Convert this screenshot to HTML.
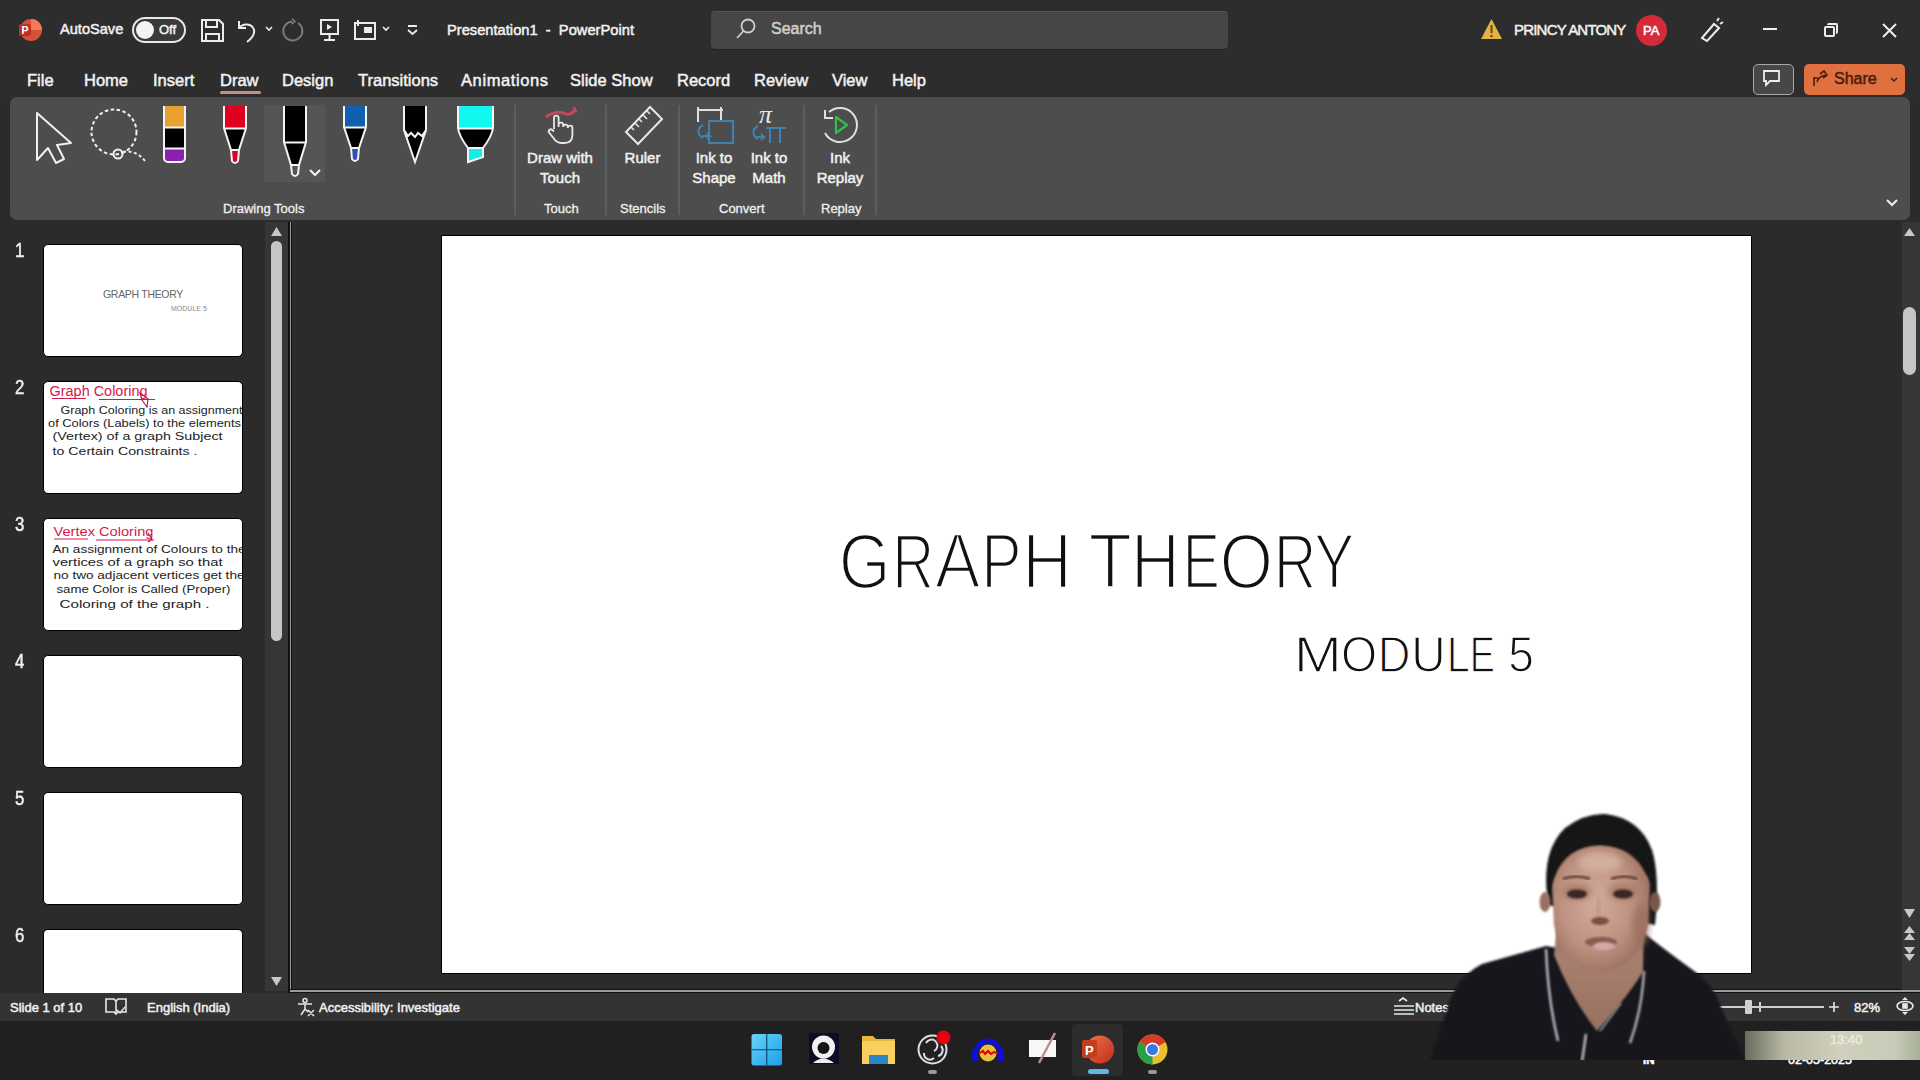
<!DOCTYPE html>
<html><head><meta charset="utf-8">
<style>
*{margin:0;padding:0;box-sizing:border-box}
html,body{width:1920px;height:1080px;overflow:hidden;background:#2b2b2b;font-family:"Liberation Sans",sans-serif;color:#fff}
.a{position:absolute}
.t{position:absolute;white-space:pre;line-height:1}
.tab,.lbl,.num,.t{-webkit-text-stroke:0.5px currentColor}
.glbl{-webkit-text-stroke:0.3px currentColor}
#title{left:0;top:0;width:1920px;height:97px;background:#2d2d2d}
#ribbon{left:10px;top:97px;width:1900px;height:123px;background:#4d4d4d;border-radius:7px}
.tab{position:absolute;top:72px;font-size:16.5px;color:#f2f2f2;white-space:pre;line-height:1}
.lbl{position:absolute;font-size:15px;color:#f0f0f0;white-space:pre;line-height:20px;text-align:center}
.glbl{position:absolute;top:202px;font-size:13px;color:#f0f0f0;white-space:pre;line-height:1}
.sep{position:absolute;top:105px;width:2px;height:110px;background:#5e5e5e}
#pane{left:0;top:220px;width:290px;height:773px;background:#2b2b2b}
.num{position:absolute;left:15px;font-size:20.5px;color:#f0f0f0;line-height:1;transform:scaleX(0.82);transform-origin:0 0;margin-top:-3px}
.thumb{position:absolute;left:43px;width:200px;height:113px;background:#fff;border:1.5px solid #000;border-radius:5px;overflow:hidden}
#status{left:0;top:993px;width:1920px;height:28px;background:#333}
#taskbar{left:0;top:1021px;width:1920px;height:59px;background:#202020}
</style></head>
<body>
<!-- Title bar + tabs -->
<div id="title" class="a"></div>

<!-- PowerPoint logo -->
<svg class="a" style="left:16px;top:17px" width="28" height="26" viewBox="0 0 28 26"><circle cx="15" cy="13" r="11" fill="#d8503a"/><path d="M15 2a11 11 0 0 1 11 11H15z" fill="#f07a5a"/><rect x="3" y="7" width="12" height="12" rx="2" fill="#b83420"/><text x="5.5" y="17" font-family="Liberation Sans" font-weight="bold" font-size="10.5" fill="#fff">P</text></svg>

<div class="t" style="left:60px;top:22px;font-size:14.6px;color:#f0f0f0">AutoSave</div>
<!-- toggle -->
<div class="a" style="left:132px;top:17px;width:54px;height:26px;border:2px solid #e8e8e8;border-radius:13px;background:#3a3a3a"></div>
<div class="a" style="left:136px;top:21px;width:18px;height:18px;border-radius:50%;background:#f4f4f4"></div>
<div class="t" style="left:159px;top:23px;font-size:13px;color:#f0f0f0">Off</div>

<!-- QAT icons -->
<svg class="a" style="left:195px;top:12px" width="230" height="36" viewBox="0 0 230 36">
 <g fill="none" stroke="#ececec" stroke-width="2">
  <!-- save -->
  <path d="M7 8h17l4 4v17H7z"/><path d="M11 8v7h11V8"/><path d="M11 29v-7h13v7"/>
  <!-- undo -->
  <path d="M44 9v7h7"/><path d="M44 16c4-5 13-5 15 2c1 5-3 9-7 12"/>
  <path d="M71 15l3 3l3-3" stroke-width="1.6"/>
  <!-- redo -->
  <path d="M103 11a9.5 9.5 0 1 1-6-1.5" stroke="#7a7a7a"/><path d="M97 6.5l3 3l-3.5 2.5" stroke="#7a7a7a" stroke-width="1.6"/>
  <!-- present -->
  <path d="M125 8h19M126 8v14h17V8M134.5 22v6M129 28h11"/>
  <path d="M132 12l5 3l-5 3z" fill="#ececec" stroke="none"/>
  <!-- another -->
  <path d="M160 11h20v16h-20z"/><path d="M163 8v6M160 11h6"/>
  <rect x="169" y="15" width="8" height="6" fill="#ececec" stroke="none"/>
  <path d="M188 15l3 3l3-3" stroke-width="1.6"/>
  <!-- customize -->
  <path d="M213 14h9M213 18l4.5 4l4.5-4" stroke-width="1.8"/>
 </g>
</svg>

<div class="t" style="left:447px;top:23px;font-size:14.7px;color:#f0f0f0">Presentation1  -  PowerPoint</div>

<!-- search -->
<div class="a" style="left:711px;top:11px;width:517px;height:38px;background:#464646;border-top:1.5px solid #555;border-radius:4px;box-shadow:0 1px 0 #222"></div>
<svg class="a" style="left:735px;top:16px" width="24" height="26" viewBox="0 0 24 26"><g fill="none" stroke="#cfcfcf" stroke-width="1.8"><circle cx="13" cy="10" r="6.5"/><path d="M8.5 15L2 22"/></g></svg>
<div class="t" style="left:771px;top:21px;font-size:16px;color:#cfcfcf">Search</div>

<!-- warning -->
<svg class="a" style="left:1480px;top:18px" width="23" height="23" viewBox="0 0 23 23"><path d="M11.5 1L22 21H1z" fill="#e3b04a"/><path d="M11.5 7v8" stroke="#6b4a10" stroke-width="2"/><circle cx="11.5" cy="18" r="1.2" fill="#6b4a10"/></svg>
<div class="t" style="left:1514px;top:22px;font-size:15px;color:#f0f0f0;letter-spacing:-0.8px">PRINCY ANTONY</div>
<div class="a" style="left:1636px;top:15px;width:31px;height:31px;border-radius:50%;background:#d42a3c"></div>
<div class="t" style="left:1643px;top:24px;font-size:13px;color:#fff">PA</div>
<!-- pen icon -->
<svg class="a" style="left:1698px;top:16px" width="28" height="28" viewBox="0 0 28 28"><g fill="none" stroke="#ececec" stroke-width="2"><path d="M4 22L16 8l5 4L9 25z"/><path d="M19 5l2-3M22 8l3-2"/></g></svg>
<!-- window controls -->
<div class="a" style="left:1763px;top:28px;width:14px;height:2px;background:#eee"></div>
<div class="a" style="left:1824px;top:26px;width:11px;height:11px;border:2px solid #eee;border-radius:2px"></div>
<div class="a" style="left:1827px;top:23px;width:11px;height:11px;border-top:2px solid #eee;border-right:2px solid #eee;border-radius:2px"></div>
<svg class="a" style="left:1881px;top:22px" width="17" height="17" viewBox="0 0 17 17"><path d="M2 2l13 13M15 2L2 15" stroke="#eee" stroke-width="2"/></svg>

<!-- tabs -->
<div class="tab" style="left:27px">File</div>
<div class="tab" style="left:84px">Home</div>
<div class="tab" style="left:153px">Insert</div>
<div class="tab" style="left:220px">Draw</div>
<div class="a" style="left:220px;top:91px;width:41px;height:3px;background:#c8907a;border-radius:2px"></div>
<div class="tab" style="left:282px">Design</div>
<div class="tab" style="left:358px">Transitions</div>
<div class="tab" style="left:461px;letter-spacing:0.6px">Animations</div>
<div class="tab" style="left:570px">Slide Show</div>
<div class="tab" style="left:677px">Record</div>
<div class="tab" style="left:754px">Review</div>
<div class="tab" style="left:832px">View</div>
<div class="tab" style="left:892px">Help</div>

<!-- comment & share -->
<div class="a" style="left:1753px;top:64px;width:41px;height:31px;border:1.5px solid #a8a8a8;border-radius:5px;background:#474747"></div>
<svg class="a" style="left:1762px;top:69px" width="20" height="18" viewBox="0 0 20 18"><path d="M2 2h15v10H8l-4 4v-4H2z" fill="none" stroke="#eee" stroke-width="1.8"/></svg>
<div class="a" style="left:1804px;top:64px;width:101px;height:31px;background:#e07040;border-radius:5px"></div>
<svg class="a" style="left:1812px;top:70px" width="18" height="18" viewBox="0 0 18 18"><g fill="none" stroke="#4a1e0c" stroke-width="1.6"><path d="M2 16V8h4M8 4l4-3l3 4l-4 3M5 12c1-4 4-6 8-7"/></g></svg>
<div class="t" style="left:1834px;top:71px;font-size:16px;color:#4a1e0c">Share</div>
<svg class="a" style="left:1889px;top:76px" width="10" height="7" viewBox="0 0 10 7"><path d="M2 2l3 3l3-3" fill="none" stroke="#4a1e0c" stroke-width="1.5"/></svg>

<!-- Ribbon -->
<div id="ribbon" class="a"></div>

<!-- Ribbon content -->
<svg class="a" style="left:10px;top:97px" width="880" height="123" viewBox="10 97 880 123">
 <g fill="none" stroke="#f0f0f0" stroke-width="2" stroke-linejoin="round">
  <!-- select arrow -->
  <path d="M37 113L37 160L48 148L56 163L64 159L57 145L71 143Z"/>
  <!-- lasso -->
  <circle cx="114" cy="132" r="22.5" stroke-dasharray="3.5 2.5"/>
  <circle cx="118" cy="154" r="4.5"/>
  <path d="M123 152c8-2 17 2 22 9" stroke-dasharray="3 2.5"/>
 </g>
 <!-- orange/black/purple marker -->
 <rect x="164" y="106" width="21" height="21" fill="#e8a030"/>
 <rect x="164" y="127" width="21" height="21" fill="#000"/>
 <rect x="165" y="149" width="19" height="13" rx="3" fill="#8a20b0"/>
 <path d="M164 106v52a4 4 0 0 0 4 4h13a4 4 0 0 0 4-4V106M164 127.5h21M164 148.5h21" fill="none" stroke="#f4f4f4" stroke-width="2"/>
 <!-- red pen -->
 <rect x="224" y="106" width="22" height="22" fill="#e00020"/>
 <path d="M224 128L231 150H239L246 128Z" fill="#000"/>
 <path d="M231 150L232 161Q235 165 238 161L239 150Z" fill="#e00020"/>
 <path d="M224 106v22l7 22l1 11q3 4 6 0l1-11l7-22V106M224 128.5h22M231 150h8" fill="none" stroke="#f4f4f4" stroke-width="2"/>
 <!-- selected black pen bg -->
 <rect x="264" y="105" width="61" height="77" fill="#555"/>
 <rect x="284" y="106" width="22" height="36" fill="#000"/>
 <path d="M284 142L291 165H299L306 142Z" fill="#000"/>
 <path d="M284 106v36l7 23l1 9q3 4 6 0l1-9l7-23V106M284 142.5h22M291 165h8" fill="none" stroke="#f4f4f4" stroke-width="2"/>
 <path d="M310 170l5 5l5-5" fill="none" stroke="#f4f4f4" stroke-width="2"/>
 <!-- blue pen -->
 <rect x="344" y="106" width="22" height="21" fill="#1060b0"/>
 <path d="M344 127L351 148H359L366 127Z" fill="#000"/>
 <path d="M351 148L352 159Q355 163 358 159L359 148Z" fill="#3050c0"/>
 <path d="M344 106v21l7 21l1 11q3 4 6 0l1-11l7-21V106M344 127.5h22M351 148h8" fill="none" stroke="#f4f4f4" stroke-width="2"/>
 <!-- pencil -->
 <path d="M404 106h22v24l-4 6l-4-3l-3 4l-4-4l-3 3l-4-6z" fill="#000"/>
 <path d="M404 130l4 6l3-3l4 4l3-4l4 3l4-6l-11 32z" fill="#000"/>
 <path d="M404 106v24l11 32l11-32V106M404 130l4 6l3-3l4 4l3-4l4 3l4-6" fill="none" stroke="#f4f4f4" stroke-width="2"/>
 <!-- highlighter -->
 <rect x="458" y="106" width="35" height="22" fill="#10f8f0"/>
 <path d="M458 128Q459 136 468 148H483Q492 136 493 128Z" fill="#000"/>
 <path d="M468 148v14l15-5v-9Z" fill="#10f0e8"/>
 <path d="M458 106v22q1 8 10 20v14l15-5v-9q9-12 10-20V106M458 128.5h35M468 148h15" fill="none" stroke="#f4f4f4" stroke-width="2"/>

 <!-- draw with touch hand -->
 <path d="M546 117c6-5 14-6 20-3c4 1 7-1 9-5" fill="none" stroke="#c84858" stroke-width="3"/>
 <path d="M574 107l2 4l-4 1" fill="none" stroke="#c84858" stroke-width="2"/>
 <path d="M554 129v-11a2.3 2.3 0 0 1 4.6 0v9v-2a2.3 2.3 0 0 1 4.6 0v2a2.3 2.3 0 0 1 4.6 0v1a2.3 2.3 0 0 1 4.6 0v7c0 5-3 8-8 8h-3c-4 0-6-2-8-5l-4-5a2 2 0 0 1 3-3l1.5 1.5" fill="none" stroke="#e8e8e8" stroke-width="1.8"/>
 <!-- ruler -->
 <path d="M626 132L650 107L662 119L638 144Z" fill="none" stroke="#e8e8e8" stroke-width="2"/>
 <path d="M631 127l3 3M635 123l4 4M639 119l3 3M643 115l4 4M647 111l3 3" stroke="#e8e8e8" stroke-width="1.5"/>
 <!-- ink to shape -->
 <path d="M697 110h26M698 107v15M721 107v15" stroke="#e0e0e0" stroke-width="2" fill="none"/>
 <path d="M709 121h24v22h-24z" fill="none" stroke="#3f82b0" stroke-width="2"/>
 <path d="M703 125c-6 3-6 10 0 13M702 136h8l-3-3M710 136l-3 3" fill="none" stroke="#3f82b0" stroke-width="2"/>
 <!-- ink to math -->
 <text x="759" y="123" font-family="Liberation Serif" font-style="italic" font-size="26" fill="#e8e8e8">π</text>
 <path d="M766 128h20M770 128v15M780 128v15" stroke="#3f82b0" stroke-width="2" fill="none"/>
 <path d="M758 126c-6 3-6 10 0 13M757 137h7l-3-3M764 137l-3 3" fill="none" stroke="#3f82b0" stroke-width="2"/>
 <!-- ink replay -->
 <path d="M829 112A17 17 0 1 1 825 133" fill="none" stroke="#e0e0e0" stroke-width="2"/>
 <path d="M825 110v8h8" fill="none" stroke="#e0e0e0" stroke-width="2"/>
 <path d="M836 117l11 8l-11 8z" fill="none" stroke="#30c050" stroke-width="2.2" stroke-linejoin="round"/>
</svg>
<div class="sep" style="left:514px"></div>
<div class="sep" style="left:605px"></div>
<div class="sep" style="left:678px"></div>
<div class="sep" style="left:803px"></div>
<div class="sep" style="left:875px"></div>

<div class="lbl" style="left:520px;top:148px;width:80px">Draw with<br>Touch</div>
<div class="lbl" style="left:610px;top:148px;width:65px">Ruler</div>
<div class="lbl" style="left:684px;top:148px;width:60px">Ink to<br>Shape</div>
<div class="lbl" style="left:740px;top:148px;width:58px">Ink to<br>Math</div>
<div class="lbl" style="left:808px;top:148px;width:64px">Ink<br>Replay</div>

<div class="glbl" style="left:223px">Drawing Tools</div>
<div class="glbl" style="left:544px">Touch</div>
<div class="glbl" style="left:620px">Stencils</div>
<div class="glbl" style="left:719px">Convert</div>
<div class="glbl" style="left:821px">Replay</div>
<svg class="a" style="left:1884px;top:197px" width="16" height="12" viewBox="0 0 16 12"><path d="M3 3l5 5l5-5" fill="none" stroke="#f0f0f0" stroke-width="2"/></svg>

<!-- Slide pane -->
<div class="num" style="top:243px">1</div>
<div class="num" style="top:380px">2</div>
<div class="num" style="top:517px">3</div>
<div class="num" style="top:654px">4</div>
<div class="num" style="top:791px">5</div>
<div class="num" style="top:928px">6</div>

<div class="thumb" style="top:244px">
  <div class="t" style="left:59px;top:44px;font-size:10.5px;color:#666;letter-spacing:-0.3px;-webkit-text-stroke:0">GRAPH THEORY</div>
  <div class="t" style="left:127px;top:60px;font-size:7px;color:#888;-webkit-text-stroke:0">MODULE 5</div>
</div>
<div class="thumb" style="top:381px">
  <svg width="198" height="110" viewBox="0 0 198 110" style="position:absolute;left:0;top:0">
   <text x="5.5" y="14" font-family="Liberation Sans" font-size="14" fill="#d81848" textLength="98" lengthAdjust="spacingAndGlyphs">Graph  Coloring</text>
   <path d="M8 16.5h34M55 17.5h56" fill="none" stroke="#d81848" stroke-width="1"/>
   <path d="M96 11l8 6l-1 8l-5-7z" fill="none" stroke="#c01040" stroke-width="1.1"/>
   <g font-family="Liberation Sans" font-size="10.5" fill="#222">
    <text x="16.5" y="32" textLength="182" lengthAdjust="spacingAndGlyphs">Graph  Coloring   is an assignment</text>
    <text x="4" y="45" textLength="193" lengthAdjust="spacingAndGlyphs">of Colors (Labels) to the elements</text>
    <text x="8.5" y="58" textLength="170" lengthAdjust="spacingAndGlyphs">(Vertex)  of  a  graph  Subject</text>
    <text x="8.5" y="72.5" textLength="145" lengthAdjust="spacingAndGlyphs">to  Certain   Constraints .</text>
   </g>
  </svg>
</div>
<div class="thumb" style="top:518px">
  <svg width="198" height="110" viewBox="0 0 198 110" style="position:absolute;left:0;top:0">
   <text x="9.5" y="17" font-family="Liberation Sans" font-size="13" fill="#d81848" textLength="100" lengthAdjust="spacingAndGlyphs">Vertex  Coloring</text>
   <path d="M10 20h34M52 21h58" fill="none" stroke="#d81848" stroke-width="1"/>
   <path d="M104 14l4 6l-4 3" fill="none" stroke="#c01040" stroke-width="1.2"/>
   <g font-family="Liberation Sans" font-size="10.5" fill="#222">
    <text x="8.5" y="33.5" textLength="193" lengthAdjust="spacingAndGlyphs">An  assignment  of  Colours  to  the</text>
    <text x="8.5" y="46.5" textLength="170" lengthAdjust="spacingAndGlyphs">vertices  of  a  graph  so  that</text>
    <text x="9.5" y="59.5" textLength="191" lengthAdjust="spacingAndGlyphs">no two  adjacent  vertices  get the</text>
    <text x="12.5" y="74" textLength="174" lengthAdjust="spacingAndGlyphs">same  Color  is  Called  (Proper)</text>
    <text x="15.5" y="89" textLength="150" lengthAdjust="spacingAndGlyphs">Coloring   of   the   graph .</text>
   </g>
  </svg>
</div>
<div class="thumb" style="top:655px"></div>
<div class="thumb" style="top:792px"></div>
<div class="thumb" style="top:929px;height:80px;border-bottom:none;border-radius:5px 5px 0 0"></div>

<!-- left scrollbar -->
<div class="a" style="left:265px;top:222px;width:23px;height:769px;background:#363636"></div>
<svg class="a" style="left:270px;top:226px" width="13" height="11" viewBox="0 0 13 11"><path d="M1 10L6.5 1L12 10Z" fill="#c8c8c8"/></svg>
<div class="a" style="left:271px;top:241px;width:11px;height:400px;background:#c5c5c5;border-radius:6px"></div>
<svg class="a" style="left:270px;top:976px" width="13" height="11" viewBox="0 0 13 11"><path d="M1 1L6.5 10L12 1Z" fill="#c8c8c8"/></svg>
<div class="a" style="left:288px;top:222px;width:4px;height:771px;background:#111"></div>
<div class="a" style="left:289.5px;top:222px;width:1.5px;height:770px;background:#9a9a9a"></div>

<!-- main area bottom border -->
<div class="a" style="left:290px;top:989px;width:1630px;height:4px;background:#111"></div>
<div class="a" style="left:290px;top:990px;width:1630px;height:1.5px;background:#9a9a9a"></div>

<!-- slide -->
<div class="a" style="left:441px;top:235px;width:1311px;height:739px;background:#fff;border:1.5px solid #000"></div>
<svg class="a" style="left:0;top:0;pointer-events:none" width="1920" height="1080" viewBox="0 0 1920 1080">
<g font-family="Liberation Sans" fill="#111" stroke="#fff" stroke-width="2.6">
<text transform="translate(838.77,587.80) scale(0.848,1)" font-size="78.51">G</text>
<text transform="translate(892.25,587.80) scale(0.740,1)" font-size="78.51">R</text>
<text transform="translate(934.90,587.80) scale(0.865,1)" font-size="78.51">A</text>
<text transform="translate(981.35,587.80) scale(0.771,1)" font-size="78.51">P</text>
<text transform="translate(1022.20,587.80) scale(0.876,1)" font-size="78.51">H</text>
<text transform="translate(1088.58,587.80) scale(0.907,1)" font-size="78.51">T</text>
<text transform="translate(1131.00,587.80) scale(0.860,1)" font-size="78.51">H</text>
<text transform="translate(1182.66,587.80) scale(0.708,1)" font-size="78.51">E</text>
<text transform="translate(1219.45,587.80) scale(0.878,1)" font-size="78.51">O</text>
<text transform="translate(1273.77,587.80) scale(0.753,1)" font-size="78.51">R</text>
<text transform="translate(1313.88,587.80) scale(0.775,1)" font-size="78.51">Y</text>
</g>
<g font-family="Liberation Sans" fill="#111" stroke="#fff" stroke-width="1.4">
<text transform="translate(1293.68,672.40) scale(1.153,1)" font-size="50.11">M</text>
<text transform="translate(1340.98,672.40) scale(0.927,1)" font-size="50.11">O</text>
<text transform="translate(1377.68,672.40) scale(0.903,1)" font-size="50.11">D</text>
<text transform="translate(1411.19,672.40) scale(0.951,1)" font-size="50.11">U</text>
<text transform="translate(1446.87,672.40) scale(0.830,1)" font-size="50.11">L</text>
<text transform="translate(1469.68,672.40) scale(0.754,1)" font-size="50.11">E</text>
<text transform="translate(1508.15,672.40) scale(0.921,1)" font-size="50.11">5</text>
</g>
</svg>

<!-- right scrollbar -->
<div class="a" style="left:1902px;top:222px;width:18px;height:768px;background:#363636"></div>
<svg class="a" style="left:1903px;top:227px" width="13" height="10" viewBox="0 0 13 10"><path d="M1 9L6.5 1L12 9Z" fill="#c8c8c8"/></svg>
<div class="a" style="left:1903px;top:307px;width:13px;height:68px;background:#c5c5c5;border-radius:7px"></div>
<svg class="a" style="left:1903px;top:908px" width="13" height="56" viewBox="0 0 13 56"><g fill="#c8c8c8"><path d="M1 1L6.5 10L12 1Z"/><path d="M1 25L6.5 18L12 25ZM1 32L6.5 25L12 32Z"/><path d="M1 39L6.5 46L12 39ZM1 46L6.5 53L12 46Z"/></g></svg>

<!-- status bar -->
<div id="status" class="a"></div>
<div class="t" style="left:10px;top:1001px;font-size:13px;color:#f0f0f0">Slide 1 of 10</div>
<svg class="a" style="left:104px;top:997px" width="24" height="20" viewBox="0 0 24 20"><g fill="none" stroke="#e8e8e8" stroke-width="1.6"><path d="M2 2h8l2 2l2-2h8v13h-8l-2 2l-2-2H2z"/><path d="M12 4v13"/><path d="M13 13l3 3l5-6" stroke-width="1.4"/></g></svg>
<div class="t" style="left:147px;top:1001px;font-size:13px;color:#f0f0f0">English (India)</div>
<svg class="a" style="left:296px;top:997px" width="20" height="20" viewBox="0 0 20 20"><g fill="none" stroke="#e8e8e8" stroke-width="1.5"><circle cx="9" cy="3.5" r="2"/><path d="M2 7h14M9 7v5l-4 6M9 12l3 3M12 13l6 6M18 13l-6 6"/></g></svg>
<div class="t" style="left:319px;top:1001px;font-size:13px;color:#f0f0f0">Accessibility: Investigate</div>
<svg class="a" style="left:1392px;top:996px" width="24" height="22" viewBox="0 0 24 22"><g fill="none" stroke="#e8e8e8" stroke-width="1.6"><path d="M7 5l4-3l4 3"/><path d="M2 10h20M2 14h20M2 18h20"/></g></svg>
<div class="t" style="left:1415px;top:1001px;font-size:13px;color:#f0f0f0">Notes</div>
<div class="a" style="left:1700px;top:1006px;width:124px;height:2px;background:#cfcfcf"></div>
<div class="a" style="left:1745px;top:1000px;width:7px;height:14px;background:#cfcfcf;border-radius:1px"></div>
<div class="a" style="left:1759px;top:1002px;width:1.5px;height:10px;background:#cfcfcf"></div>
<svg class="a" style="left:1828px;top:1001px" width="12" height="12" viewBox="0 0 12 12"><path d="M6 1v10M1 6h10" stroke="#e8e8e8" stroke-width="1.6"/></svg>
<div class="t" style="left:1854px;top:1001px;font-size:13px;color:#f0f0f0">82%</div>
<svg class="a" style="left:1895px;top:996px" width="20" height="20" viewBox="0 0 20 20"><g fill="none" stroke="#e8e8e8" stroke-width="1.6"><path d="M10 1l-3 3h6zM10 19l-3-3h6z" fill="#e8e8e8" stroke="none"/><ellipse cx="10" cy="10" rx="8" ry="4.5"/><rect x="8" y="8" width="4" height="4" fill="#e8e8e8"/></g></svg>

<!-- taskbar -->
<div id="taskbar" class="a"></div>
<svg class="a" style="left:740px;top:1020px" width="440" height="60" viewBox="740 1020 440 60">
 <defs>
  <linearGradient id="win" x1="0" y1="0" x2="1" y2="1"><stop offset="0" stop-color="#6ad4f8"/><stop offset="1" stop-color="#1aa0e8"/></linearGradient>
  <linearGradient id="ppt" x1="0" y1="0" x2="1" y2="1"><stop offset="0" stop-color="#f07050"/><stop offset="1" stop-color="#c03018"/></linearGradient>
 </defs>
 <rect x="751.5" y="1034" width="30.5" height="31.5" rx="2.5" fill="url(#win)"/><path d="M766.75 1034v31.5M751.5 1049.75h30.5" stroke="#0a4a70" stroke-width="1.2"/>
 <!-- webcam -->
 <rect x="809" y="1033" width="30" height="31" fill="#0c0c2a"/>
 <circle cx="823.5" cy="1047" r="11.5" fill="#f0f0f0"/><circle cx="823.5" cy="1048" r="6" fill="#151515"/>
 <path d="M813 1063q10-9 21 0z" fill="#f0f0f0"/>
 <!-- folder -->
 <path d="M862 1036h11l3 3h19v25h-33z" fill="#e8b838"/>
 <rect x="862" y="1041" width="33" height="23" fill="#f8d060"/>
 <rect x="869" y="1055" width="19" height="9" fill="#2a88c8"/>
 <!-- obs -->
 <circle cx="932.5" cy="1049.5" r="14" fill="#222" stroke="#e0e0e0" stroke-width="2"/>
 <path d="M926 1043a6 6 0 1 1 8 8M934 1058a6 6 0 0 1-10-5M941 1046a6 6 0 0 1-3 10" fill="none" stroke="#ddd" stroke-width="2"/>
 <circle cx="943.5" cy="1037.5" r="7" fill="#e80010"/>
 <rect x="928" y="1070" width="9" height="4" rx="2" fill="#999"/>
 <!-- audio -->
 <path d="M974 1058a14 17 0 0 1 28 0" fill="none" stroke="#1010d0" stroke-width="5"/>
 <rect x="972" y="1050" width="6" height="12" rx="2" fill="#1010d0"/><rect x="998" y="1050" width="6" height="12" rx="2" fill="#1010d0"/>
 <circle cx="988" cy="1053" r="8.5" fill="#e8c040"/>
 <path d="M980 1053l3-2l2 3l3-3l3 3l3-2l4 1" fill="none" stroke="#e00000" stroke-width="2"/>
 <!-- whiteboard -->
 <rect x="1029" y="1040" width="27" height="17" fill="#f8f8f8"/>
 <path d="M1055 1033l-16 30" stroke="#b89090" stroke-width="2.5"/>
 <!-- ppt highlight -->
 <rect x="1072" y="1024" width="51" height="52" rx="4" fill="#2c2c2c"/>
 <circle cx="1100" cy="1049.5" r="14" fill="url(#ppt)"/>
 <rect x="1082" y="1040" width="15" height="18" rx="2" fill="#c43e1c"/>
 <text x="1085" y="1055" font-family="Liberation Sans" font-weight="bold" font-size="13" fill="#fff">P</text>
 <rect x="1088" y="1069" width="21" height="5" rx="2.5" fill="#60b8e0"/>
 <!-- chrome -->
 <circle cx="1152.5" cy="1049.5" r="15" fill="#e8c030"/>
 <path d="M1152.5 1049.5L1139.5 1042A15 15 0 0 1 1165.5 1042Z" fill="#d83a2a"/>
 <path d="M1152.5 1049.5L1139.5 1042A15 15 0 0 0 1152.5 1064.5Z" fill="#28a048"/>
 <circle cx="1152.5" cy="1049.5" r="7" fill="#fff"/><circle cx="1152.5" cy="1049.5" r="5.5" fill="#3a78e0"/>
 <rect x="1148" y="1070" width="9" height="4" rx="2" fill="#999"/>
</svg>

<!-- clock strip -->
<div class="t" style="left:1788px;top:1054px;font-size:12.5px;color:#fff">02-05-2025</div>
<div class="t" style="left:1643px;top:1055px;font-size:11.5px;color:#fff;font-weight:bold">IN</div>
<div class="a" style="left:1745px;top:1031px;width:175px;height:29px;background:linear-gradient(90deg,#6a6a5c 0%,#b8b8a4 22%,#d0d0bc 55%,#c8ccb8 85%,#a8b098 100%)"></div>
<div class="t" style="left:1830px;top:1033px;font-size:13px;color:#fff;opacity:.55">13:40</div>
<div class="a" style="left:1420px;top:1060px;width:500px;height:0px"></div>
<!-- webcam person -->
<svg class="a" style="left:1420px;top:800px" width="330" height="262" viewBox="1420 800 330 262">
 <defs>
  <filter id="bl" x="-30%" y="-30%" width="160%" height="160%"><feGaussianBlur stdDeviation="1.2"/></filter>
  <filter id="bl2" x="-30%" y="-30%" width="160%" height="160%"><feGaussianBlur stdDeviation="3"/></filter>
  <radialGradient id="skin" cx="0.45" cy="0.45" r="0.6"><stop offset="0" stop-color="#d4ac9c"/><stop offset="0.6" stop-color="#bf9282"/><stop offset="1" stop-color="#9a6e5e"/></radialGradient>
  <linearGradient id="neckg" x1="0" y1="0" x2="0" y2="1"><stop offset="0" stop-color="#8c6454"/><stop offset="0.35" stop-color="#a88070"/><stop offset="1" stop-color="#987060"/></linearGradient>
  <linearGradient id="shirtg" x1="0" y1="0" x2="1" y2="0"><stop offset="0" stop-color="#1a2030"/><stop offset="0.5" stop-color="#141820"/><stop offset="1" stop-color="#0c0d10"/></linearGradient>
  <clipPath id="camclip"><rect x="1420" y="800" width="330" height="260"/></clipPath>
 </defs>
 <g clip-path="url(#camclip)">
 <!-- shirt -->
 <path d="M1430 1062L1447 1010Q1455 978 1482 964L1546 946L1600 955L1644 933Q1665 950 1690 968Q1715 985 1722 1010L1745 1062Z" fill="#12161b" filter="url(#bl)"/>
 <!-- neck -->
 <path d="M1558 915L1644 915L1643 972Q1625 1000 1597 1031Q1572 1000 1554 955Z" fill="url(#neckg)" filter="url(#bl)"/>
 <!-- collar stripes -->
 <path d="M1546 949Q1548 1000 1558 1041" fill="none" stroke="#b8bcc4" stroke-width="2.5" filter="url(#bl)"/>
 <path d="M1644 971Q1642 1010 1630 1043" fill="none" stroke="#b0b0b0" stroke-width="2.5" filter="url(#bl)"/>
 <path d="M1586 1034L1582 1062" fill="none" stroke="#c0c0c0" stroke-width="2.5" filter="url(#bl)"/>
 <path d="M1621 1003L1600 1031" fill="none" stroke="#909090" stroke-width="2" filter="url(#bl)"/>
 <!-- hair back -->
 <path d="M1547 895Q1542 850 1565 828Q1585 813 1605 814Q1640 818 1652 850Q1660 875 1655 925L1548 905Z" fill="#161616" filter="url(#bl)"/>
 <!-- ears -->
 <ellipse cx="1545" cy="902" rx="5.5" ry="10" fill="#9a7060" filter="url(#bl)"/>
 <ellipse cx="1655" cy="902" rx="5.5" ry="10" fill="#7a5848" filter="url(#bl)"/>
 <!-- face -->
 <path d="M1552 885Q1556 846 1600 844Q1644 846 1650 885L1648 925Q1640 968 1600 972Q1562 968 1554 925Z" fill="url(#skin)" filter="url(#bl)"/>
 <!-- hair front -->
 <path d="M1549 890Q1546 845 1575 830Q1600 822 1625 830Q1652 845 1652 880L1646 874Q1632 846 1600 845Q1566 846 1554 878Z" fill="#181818" filter="url(#bl)"/>
 <!-- shading -->
 <ellipse cx="1577" cy="892" rx="15" ry="8" fill="#a47868" opacity="0.8" filter="url(#bl2)"/>
 <ellipse cx="1623" cy="892" rx="15" ry="8" fill="#a47868" opacity="0.8" filter="url(#bl2)"/>
 <ellipse cx="1641" cy="925" rx="8" ry="22" fill="#9a6e5e" opacity="0.7" filter="url(#bl2)"/>
 <ellipse cx="1600" cy="862" rx="22" ry="10" fill="#dcc0b0" opacity="0.6" filter="url(#bl2)"/>
 <!-- brows/eyes -->
 <path d="M1563 879Q1576 874 1590 879M1611 879Q1624 874 1637 879" stroke="#5a3a30" stroke-width="2.5" fill="none" filter="url(#bl)"/>
 <ellipse cx="1577" cy="894" rx="10" ry="4.5" fill="#3a2520" filter="url(#bl)"/>
 <ellipse cx="1623" cy="894" rx="10" ry="4.5" fill="#3a2520" filter="url(#bl)"/>
 <!-- nose/mouth -->
 <path d="M1600 897L1597 916" stroke="#b08878" stroke-width="3" filter="url(#bl2)"/>
 <ellipse cx="1600" cy="921" rx="9" ry="4" fill="#7a5040" filter="url(#bl)"/>
 <ellipse cx="1601" cy="942" rx="16" ry="5" fill="#8a5a50" filter="url(#bl)"/>
 <ellipse cx="1604" cy="946" rx="11" ry="4" fill="#d4a8a8" filter="url(#bl)"/>
 </g>
</svg>
</body></html>
